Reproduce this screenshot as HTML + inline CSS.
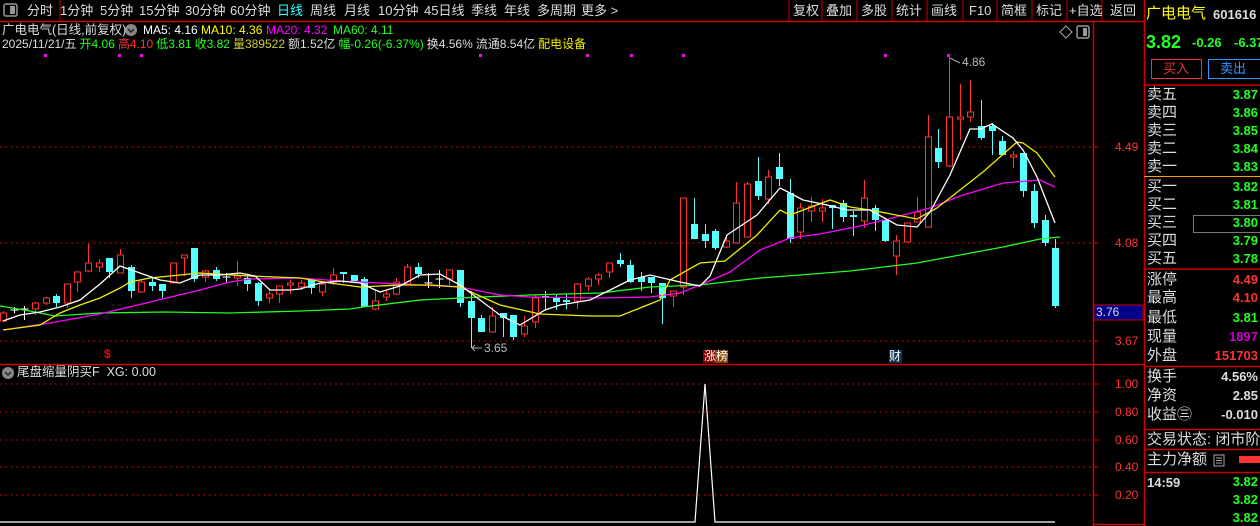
<!DOCTYPE html>
<html><head><meta charset="utf-8"><style>
*{margin:0;padding:0;box-sizing:border-box}
body{width:1260px;height:526px;background:#000;overflow:hidden;position:relative;font-family:"Liberation Sans","Noto Sans CJK SC",sans-serif;color:#ddd}
.a{position:absolute;white-space:nowrap;line-height:1}
.tb{font-size:13px;top:4px;color:#ddd}
.i{font-size:12px}
.fl span{margin-right:3px}
.rl{font-size:15px;color:#ddd;left:1147px}
.rv{font-size:13px;font-weight:bold;right:2px;text-align:right;color:#2f2}
.ax{font-size:12px;color:#f33;left:1115px}
</style></head><body>
<svg width="1260" height="526" style="position:absolute;left:0;top:0" id="s">
<line x1="0" y1="21.5" x2="1144" y2="21.5" stroke="#c00" stroke-width="1.5"/>
<line x1="60" y1="0" x2="60" y2="21" stroke="#c00"/>
<g stroke="#c00">
<line x1="789" y1="0" x2="789" y2="21"/><line x1="822" y1="0" x2="822" y2="21"/><line x1="857" y1="0" x2="857" y2="21"/><line x1="892" y1="0" x2="892" y2="21"/><line x1="927" y1="0" x2="927" y2="21"/><line x1="963" y1="0" x2="963" y2="21"/><line x1="997" y1="0" x2="997" y2="21"/><line x1="1032" y1="0" x2="1032" y2="21"/><line x1="1067" y1="0" x2="1067" y2="21"/><line x1="1102" y1="0" x2="1102" y2="21"/>
</g>
<rect x="4" y="4" width="13" height="12" rx="2" fill="none" stroke="#999" stroke-width="1.5"/><rect x="10" y="6" width="5" height="8" fill="#999"/>
<line x1="1093.5" y1="22" x2="1093.5" y2="526" stroke="#c00" stroke-width="1.5"/>
<line x1="1144.5" y1="0" x2="1144.5" y2="526" stroke="#c00" stroke-width="1.5"/>
<line x1="0" y1="364.5" x2="1144" y2="364.5" stroke="#c00" stroke-width="1.5"/>
<line x1="1093" y1="524.5" x2="1144" y2="524.5" stroke="#c00" stroke-width="1.5"/>
<g stroke="#c00" stroke-dasharray="1.5,4" stroke-width="1.2">
<line x1="0" y1="147" x2="1093" y2="147"/><line x1="0" y1="243" x2="1093" y2="243"/><line x1="0" y1="341" x2="1093" y2="341"/>
<line x1="0" y1="384" x2="1093" y2="384"/><line x1="0" y1="412" x2="1093" y2="412"/><line x1="0" y1="440" x2="1093" y2="440"/><line x1="0" y1="467" x2="1093" y2="467"/><line x1="0" y1="495" x2="1093" y2="495"/>
</g>
<g stroke="#c00"><line x1="1094" y1="147" x2="1099" y2="147"/><line x1="1094" y1="243" x2="1099" y2="243"/><line x1="1094" y1="341" x2="1099" y2="341"/>
<line x1="1094" y1="384" x2="1099" y2="384"/><line x1="1094" y1="412" x2="1099" y2="412"/><line x1="1094" y1="440" x2="1099" y2="440"/><line x1="1094" y1="467" x2="1099" y2="467"/><line x1="1094" y1="495" x2="1099" y2="495"/></g>
<rect x="1094" y="305" width="49" height="15" fill="#00008b" stroke="#c00"/>
<path d="M1066 26 L1072 32 L1066 38 L1060 32 Z" fill="none" stroke="#aaa"/>
<rect x="1077" y="26" width="12" height="12" rx="2" fill="none" stroke="#999" stroke-width="1.5"/><rect x="1083" y="28" width="4" height="8" fill="#999"/>
<g id="c"></g>
<g fill="#f0f">
<rect x="44" y="54" width="3" height="3"/><rect x="118" y="54" width="3" height="3"/><rect x="140" y="54" width="3" height="3"/><rect x="479" y="54" width="3" height="3"/><rect x="586" y="54" width="3" height="3"/><rect x="630" y="54" width="3" height="3"/><rect x="682" y="54" width="3" height="3"/><rect x="884" y="54" width="3" height="3"/><rect x="947" y="54" width="3" height="3"/>
</g>
<path d="M950 58 L960 63" stroke="#aaa"/><path d="M472 348 L482 348 M472 348 L475 345 M472 348 L475 351" stroke="#aaa"/>
<polyline points="0,522 695,522 705,384 715,522 1055,522" fill="none" stroke="#fff" stroke-width="1.2"/>
<circle cx="8" cy="373" r="6" fill="#888"/><path d="M5 372 L8 375 L11 372" stroke="#222" fill="none" stroke-width="1.5"/>
<circle cx="131" cy="30" r="6" fill="#888"/><path d="M128 29 L131 32 L134 29" stroke="#222" fill="none" stroke-width="1.5"/>
<line x1="1144" y1="85" x2="1260" y2="85" stroke="#c00" stroke-width="1.5"/>
<line x1="1144" y1="176.5" x2="1260" y2="176.5" stroke="#f90"/>
<line x1="1144" y1="269" x2="1260" y2="269" stroke="#c00" stroke-width="1.5"/>
<line x1="1144" y1="366.5" x2="1260" y2="366.5" stroke="#c00" stroke-width="1.5"/>
<line x1="1144" y1="429.5" x2="1260" y2="429.5" stroke="#c00" stroke-width="1.5"/>
<line x1="1144" y1="449.5" x2="1260" y2="449.5" stroke="#c00" stroke-width="1.5"/>
<line x1="1144" y1="472.5" x2="1260" y2="472.5" stroke="#c00" stroke-width="1.5"/>
<rect x="1151.5" y="59.5" width="50" height="19" fill="none" stroke="#e33"/>
<rect x="1208.5" y="59.5" width="55" height="19" fill="none" stroke="#39f"/>
<rect x="1193.5" y="215.5" width="70" height="17" fill="none" stroke="#777"/>
<rect x="1214" y="455" width="10" height="11" fill="none" stroke="#aaa"/><path d="M1216 458h6M1216 460.5h6M1216 463h6" stroke="#aaa"/>
<rect x="1239" y="456" width="21" height="7" fill="#f33"/>
<rect x="703" y="350" width="13" height="13" fill="#800"/><rect x="715" y="350" width="13" height="13" fill="#840"/>
<rect x="889" y="350" width="13" height="13" fill="#135"/>
</svg>
<span class="a tb" style="left:27px">分时</span><span class="a tb" style="left:60px">1分钟</span><span class="a tb" style="left:100px">5分钟</span><span class="a tb" style="left:139px">15分钟</span><span class="a tb" style="left:185px">30分钟</span><span class="a tb" style="left:230px">60分钟</span><span class="a tb" style="left:277px;color:#3ff">日线</span><span class="a tb" style="left:310px">周线</span><span class="a tb" style="left:344px">月线</span><span class="a tb" style="left:378px">10分钟</span><span class="a tb" style="left:424px">45日线</span><span class="a tb" style="left:471px">季线</span><span class="a tb" style="left:504px">年线</span><span class="a tb" style="left:537px">多周期</span><span class="a tb" style="left:581px">更多 &gt;</span>
<span class="a tb" style="left:793px">复权</span><span class="a tb" style="left:826px">叠加</span><span class="a tb" style="left:861px">多股</span><span class="a tb" style="left:896px">统计</span><span class="a tb" style="left:931px">画线</span><span class="a tb" style="left:969px">F10</span><span class="a tb" style="left:1001px">简框</span><span class="a tb" style="left:1036px">标记</span><span class="a tb" style="left:1069px">+自选</span><span class="a tb" style="left:1110px">返回</span>
<span class="a i" style="left:2px;top:24px;font-size:12.5px">广电电气(日线,前复权)</span>
<span class="a i" style="left:143px;top:24px;color:#fff">MA5: 4.16</span><span class="a i" style="left:201px;top:24px;color:#ff0">MA10: 4.36</span><span class="a i" style="left:266px;top:24px;color:#f0f">MA20: 4.32</span><span class="a i" style="left:333px;top:24px;color:#2f2">MA60: 4.11</span>
<div class="a i fl" style="left:2px;top:38px"><span>2025/11/21/五</span><span style="color:#2f2">开4.06</span><span style="color:#f33">高4.10</span><span style="color:#2f2">低3.81</span><span style="color:#2f2">收3.82</span><span style="color:#cc3">量389522</span><span>额1.52亿</span><span style="color:#2f2">幅-0.26(-6.37%)</span><span>换4.56%</span><span>流通8.54亿</span><span style="color:#ee0">配电设备</span></div>
<span class="a" style="left:962px;top:56px;font-size:12px;color:#bbb">4.86</span>
<span class="a" style="left:484px;top:342px;font-size:12px;color:#bbb">3.65</span>
<span class="a" style="left:104px;top:348px;font-size:12px;color:#f00;font-weight:bold">$</span>
<span class="a" style="left:704px;top:350px;font-size:12px;color:#fff">涨榜</span>
<span class="a" style="left:889px;top:350px;font-size:12px;color:#fff">财</span>
<span class="a" style="left:17px;top:366px;font-size:12.5px">尾盘缩量阴买F&nbsp; XG: 0.00</span>
<span class="a ax" style="top:141px">4.49</span><span class="a ax" style="top:237px">4.08</span><span class="a ax" style="top:335px">3.67</span>
<span class="a" style="left:1096px;top:306px;font-size:12px;color:#ddd">3.76</span>
<span class="a ax" style="top:378px">1.00</span><span class="a ax" style="top:406px">0.80</span><span class="a ax" style="top:434px">0.60</span><span class="a ax" style="top:461px">0.40</span><span class="a ax" style="top:489px">0.20</span>
<span class="a" style="left:1146px;top:6px;font-size:15px;color:#ff0">广电电气</span><span class="a" style="left:1213px;top:8px;font-size:13px;color:#ddd;font-weight:bold">601616</span>
<span class="a" style="left:1146px;top:33px;font-size:18px;color:#2f2;font-weight:bold">3.82</span><span class="a" style="left:1192px;top:36px;font-size:13px;color:#2f2;font-weight:bold">-0.26</span><span class="a" style="left:1234px;top:36px;font-size:13px;color:#2f2;font-weight:bold">-6.37</span>
<span class="a" style="left:1163px;top:62px;font-size:13px;color:#e33">买入</span><span class="a" style="left:1220px;top:62px;font-size:13px;color:#39f">卖出</span>
<div id="r"></div>
<script>
var r=document.getElementById('r'),h='';
function L(t,y,v,c){h+='<span class="a rl" style="top:'+(y-8)+'px">'+t+'</span><span class="a rv" style="top:'+(y-7)+'px;color:'+c+'">'+v+'</span>';}
var G='#2f2',R='#f33',W='#ddd';
L('卖五',95,'3.87',G);L('卖四',113,'3.86',G);L('卖三',131,'3.85',G);L('卖二',149,'3.84',G);L('卖一',167,'3.83',G);
L('买一',187,'3.82',G);L('买二',205,'3.81',G);L('买三',223,'3.80',G);L('买四',241,'3.79',G);L('买五',259,'3.78',G);
L('涨停',280,'4.49',R);L('最高',298,'4.10',R);L('最低',318,'3.81',G);L('现量',337,'1897','#c0c');L('外盘',356,'151703',R);
L('换手',377,'4.56%',W);L('净资',396,'2.85',W);L('收益㊂',415,'-0.010',W);
h+='<span class="a rl" style="top:432px">交易状态: 闭市阶</span><span class="a rl" style="top:452px">主力净额</span>';
h+='<span class="a" style="left:1147px;top:476px;font-size:13px;font-weight:bold;color:#ddd">14:59</span>';
[482,500,518].forEach(function(y){h+='<span class="a rv" style="top:'+(y-7)+'px">3.82</span>';});
r.innerHTML=h;
var D=[['r',313,321,311,321],['w',310,310,307,313],['w',309,309,306,320],['r',303,309,302,315],['r',298,303,297,305],['c',296,303,294,307],['r',284,303,284,308],['r',272,282,271,292],['r',263,271,244,272],['r',263,267,259,272],
['c',258,272,258,278],['r',255,273,249,273],['c',267,291,265,298],['r',282,292,280,292],['c',282,286,278,291],['c',284,291,284,298],['r',263,283,263,283],['r',255,258,255,276],['c',248,279,248,282],['r',271,277,270,282],
['c',270,279,267,281],['w',277,277,273,282],['r',276,278,261,286],['c',278,284,276,291],['c',283,301,282,306],['r',294,298,290,303],['r',286,294,286,303],['r',283,285,280,294],['r',283,287,280,290],['c',279,288,279,294],
['r',284,292,284,296],['r',275,282,268,285],['c',272,274,272,283],['c',275,281,275,283],['c',279,307,277,307],['r',301,309,290,310],['r',294,297,291,301],['r',282,294,278,295],['r',267,284,264,285],['c',267,274,263,278],
['w',283,283,273,288],['w',279,279,270,288],['r',270,279,270,285],['c',270,303,270,307],['c',301,318,291,348],['c',318,332,315,332],['r',316,332,307,332],['c',313,318,313,337],['c',315,337,315,340],['r',326,334,316,337],
['r',298,322,295,328],['c',296,298,291,309],['c',298,302,294,310],['c',300,302,294,309],['r',284,301,283,309],['r',279,286,277,291],['r',275,279,273,285],['r',263,272,263,278],['c',260,264,253,267],['c',265,282,260,283],
['c',277,282,272,291],['c',277,283,277,293],['c',283,298,283,324],['r',291,296,291,307],['r',198,287,198,295],['c',224,239,198,239],['c',234,241,224,248],['c',231,248,229,250],['r',241,247,237,248],['r',203,243,182,243],
['r',184,237,182,237],['c',181,196,157,200],['r',177,199,170,204],['c',167,179,153,186],['c',193,239,179,243],['r',208,232,203,239],['r',206,211,197,222],['r',208,211,199,222],['c',205,208,205,229],['c',203,217,200,222],
['c',215,217,211,236],['r',198,221,180,228],['c',208,220,205,231],['c',220,241,220,242],['r',241,256,235,275],['r',223,242,223,242],['r',212,222,197,222],['r',137,227,115,227],['c',148,162,129,168],['r',117,166,57,167],
['r',117,119,84,140],['r',112,117,80,122],['c',126,138,100,140],['c',126,131,123,155],['c',141,155,136,155],['r',155,157,151,168],['c',153,191,153,197],['c',191,223,184,228],['c',220,243,215,246],['c',248,306,239,308]];
var s='';
D.forEach(function(d,i){var x=Math.round(3+i*10.63)+0.5,t=d[0];
if(t=='c'){s+='<line x1="'+x+'" y1="'+d[3]+'" x2="'+x+'" y2="'+d[4]+'" stroke="#5ff"/><rect x="'+(x-3.5)+'" y="'+d[1]+'" width="7" height="'+Math.max(1,d[2]-d[1])+'" fill="#5ff"/>';}
else if(t=='r'){s+='<line x1="'+x+'" y1="'+d[3]+'" x2="'+x+'" y2="'+d[1]+'" stroke="#f33"/><line x1="'+x+'" y1="'+d[2]+'" x2="'+x+'" y2="'+d[4]+'" stroke="#f33"/><rect x="'+(x-3)+'" y="'+d[1]+'" width="6" height="'+Math.max(1,d[2]-d[1])+'" fill="none" stroke="#f33"/>';}
else{s+='<line x1="'+x+'" y1="'+d[3]+'" x2="'+x+'" y2="'+d[4]+'" stroke="#fff"/><line x1="'+(x-4)+'" y1="'+d[1]+'" x2="'+(x+4)+'" y2="'+d[1]+'" stroke="#fff"/>';}});
function P(p,c){return '<polyline points="'+p+'" fill="none" stroke="'+c+'" stroke-width="1.3"/>';}
s+=P('0,306 30,311 55,316 100,313 165,312 230,313 300,311 350,309 363,307 420,300 480,297 530,295 600,293 650,287 700,285 760,278 800,275 850,271 917,263 960,255 1003,247 1040,239 1060,237','#2f2');
s+=P('3,330 50,323 100,314 150,302 200,290 230,282 250,279 300,278 340,281 360,282 400,284 460,287 500,295 530,297 600,298 650,297 680,293 700,285 730,272 760,250 790,238 820,234 860,226 900,216 930,208 960,196 1003,183 1040,180 1055,187','#f0f');
s+=P('3,330 40,325 60,313 80,305 100,298 120,288 130,282 150,278 200,273 250,276 300,278 330,283 360,287 400,285 430,285 460,287 500,305 540,314 590,316 620,316 660,300 670,280 700,263 725,261 757,235 780,210 790,215 830,200 850,207 870,210 917,219 937,208 983,172 1017,142 1023,143 1037,153 1055,177','#ee0');
s+=P('3,321 20,315 40,312 60,307 80,300 100,284 120,266 140,273 160,280 180,283 200,275 220,275 240,273 255,276 270,290 290,290 300,289 320,283 340,281 360,283 380,292 400,286 420,275 440,274 460,285 480,300 500,315 520,325 545,310 560,305 590,300 610,290 630,280 650,275 680,282 700,286 710,276 727,235 757,215 780,188 790,193 803,200 827,205 847,210 870,210 897,225 917,227 930,212 950,175 970,129 980,129 992,124 1013,138 1023,150 1037,177 1055,223','#fff');
document.getElementById('c').innerHTML=s;
</script>
</body></html>
